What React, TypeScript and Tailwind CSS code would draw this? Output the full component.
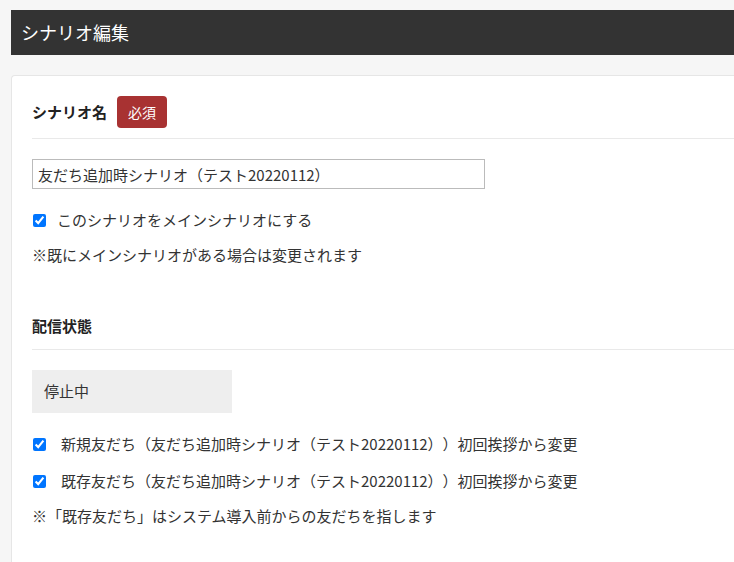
import React from "react";

const font = { fontFamily: '"Noto Sans CJK JP", "Noto Sans", sans-serif' };

function Check({ gap }: { gap: string }) {
  return (
    <input
      type="checkbox"
      defaultChecked
      className={`ml-[1px] h-[13px] w-[13px] shrink-0 accent-[#0075ff] ${gap}`}
    />
  );
}

export default function App() {
  return (
    <div
      className="min-h-[562px] w-full bg-[#f6f6f6] pl-[11px] pt-[10px] text-[#333] [text-spacing-trim:space-all]"
      style={font}
    >
      <div className="flex h-[45px] items-center bg-[#333333] pl-[10px] text-[18px] text-white">
        シナリオ編集
      </div>
      <div className="mt-[20px] min-h-[487px] rounded-tl-[4px] border border-r-0 border-b-0 border-[#e6e6e6] bg-white pl-[20px]">
        <div className="mt-[20px] flex h-[32px] items-center">
          <span className="text-[15px] font-bold text-[#222]">シナリオ名</span>
          <span className="ml-[10px] flex h-[32px] w-[50px] items-center justify-center rounded-[4px] bg-[#a83232] text-[14px] text-white">
            必須
          </span>
        </div>
        <div className="mt-[10px] border-t border-[#e9e9e9]" />
        <input
          type="text"
          defaultValue="友だち追加時シナリオ（テスト20220112）"
          className="mt-[20px] block h-[30px] w-[453px] border border-[#bbbbbb] px-[5px] text-[15px] text-[#333] outline-none [text-spacing-trim:space-all]"
          style={font}
        />
        <label className="mt-[20px] flex h-[22px] items-center text-[15px] leading-[22px]">
          <Check gap="mr-[11px]" />
          このシナリオをメインシナリオにする
        </label>
        <p className="mt-[13px] text-[15px] leading-[22px]">
          ※既にメインシナリオがある場合は変更されます
        </p>
        <div className="mt-[49px] text-[15px] font-bold leading-[22px] text-[#222]">配信状態</div>
        <div className="mt-[12px] border-t border-[#e9e9e9]" />
        <div className="mt-[20px] flex h-[43px] w-[200px] items-center bg-[#eeeeee] pl-[12px] text-[15px]">
          停止中
        </div>
        <label className="mt-[20px] flex h-[22px] items-center text-[15px] leading-[22px]">
          <Check gap="mr-[15px]" />
          新規友だち（友だち追加時シナリオ（テスト20220112））初回挨拶から変更
        </label>
        <label className="mt-[15px] flex h-[22px] items-center text-[15px] leading-[22px]">
          <Check gap="mr-[15px]" />
          既存友だち（友だち追加時シナリオ（テスト20220112））初回挨拶から変更
        </label>
        <p className="mt-[13px] text-[15px] leading-[22px]">
          ※「既存友だち」はシステム導入前からの友だちを指します
        </p>
      </div>
    </div>
  );
}
